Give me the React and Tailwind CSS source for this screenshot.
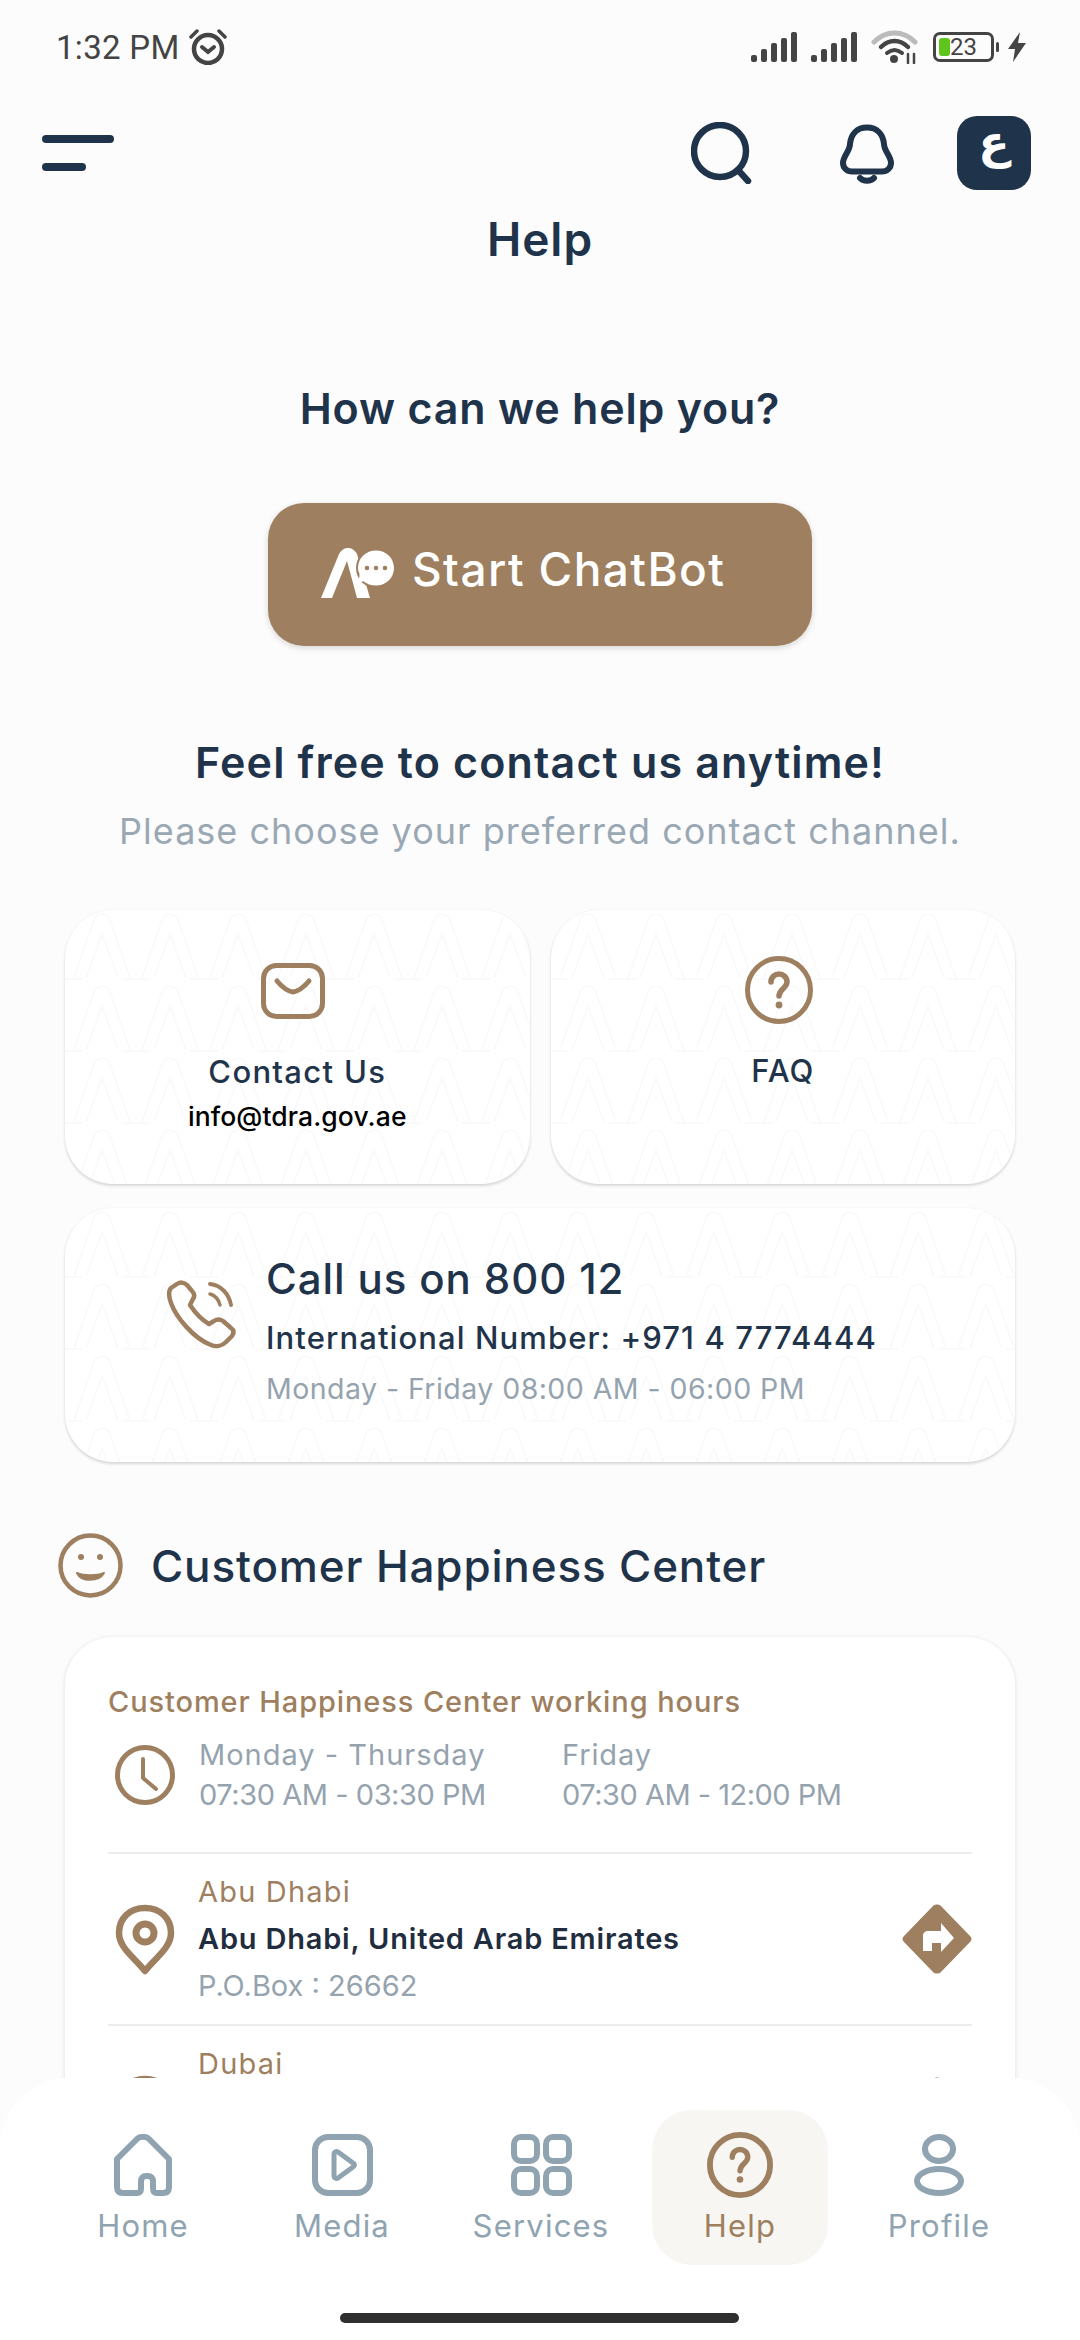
const navy = "#1f344a"
const tan = "#9e7f5f"
const slate = "#8fa3b0"

function SignalIcon() {
  return (
    <svg width="47" height="30" viewBox="0 0 47 30" fill="#444">
      <rect x="0" y="23" width="6" height="7" rx="2" />
      <rect x="10" y="17" width="6" height="13" rx="2" />
      <rect x="20" y="11" width="6" height="19" rx="2" />
      <rect x="30" y="6" width="6" height="24" rx="2" />
      <rect x="40" y="0" width="6" height="30" rx="2" />
    </svg>
  )
}

function StatusBar() {
  return (
    <div className="h-[94px] pl-[56px] pr-[54px] flex items-center justify-between">
      <div className="flex items-center gap-[8px]">
        <span className="font-['Roboto'] text-[33px] leading-none tracking-[0.3px] text-[#444]">1:32 PM</span>
        <svg width="40" height="36" viewBox="0 0 40 36" fill="none" stroke="#444" strokeLinecap="round">
          <circle cx="20" cy="20" r="14" strokeWidth="4.5" />
          <path d="M14 18l6 5 6-5" strokeWidth="4" />
          <path d="M3 8l6-6M37 8l-6-6" strokeWidth="3.5" />
        </svg>
      </div>
      <div className="flex items-center">
        <SignalIcon />
        <div className="w-[13px]" />
        <SignalIcon />
        <svg className="ml-[13px]" width="47" height="34" viewBox="0 0 47 34" fill="none" strokeLinecap="round">
          <path d="M3 12C15 0 32 0 44 12" stroke="#bbb" strokeWidth="5" />
          <path d="M10 17c8-8 19-8 27 0" stroke="#444" strokeWidth="4.5" />
          <path d="M16 23c5-4 10-4 15 0" stroke="#444" strokeWidth="4" />
          <circle cx="23" cy="29" r="4" fill="#444" />
          <path d="M37 24v9M43 24v9" stroke="#444" strokeWidth="2.5" />
        </svg>
        <div className="ml-[15px] relative w-[61px] h-[30px] rounded-[7px] border-[3px] border-[#444] flex items-center">
          <div className="absolute left-[3px] top-[3px] bottom-[3px] w-[11px] rounded-[3px] bg-[#5fc41e]" />
          <span className="relative ml-[14px] font-['Roboto'] text-[24px] leading-none text-[#444]">23</span>
        </div>
        <div className="ml-[2px] w-[3px] h-[10px] rounded-full bg-[#444]" />
        <svg className="ml-[9px]" width="18" height="30" viewBox="0 0 18 30" fill="#444">
          <path d="M12 0L0 17h7l-2 13L18 11h-8z" />
        </svg>
      </div>
    </div>
  )
}

function Header() {
  return (
    <div className="mt-[22px] h-[73px] pl-[42px] pr-[49px] flex items-center">
      <div className="flex flex-col gap-[20px]">
        <div className="w-[72px] h-[8px] rounded-full bg-[#1f344a]" />
        <div className="w-[44px] h-[8px] rounded-full bg-[#1f344a]" />
      </div>
      <svg className="ml-auto" width="62" height="62" viewBox="0 0 62 62" fill="none" stroke={navy} strokeWidth="6.5" strokeLinecap="round">
        <circle cx="29" cy="29" r="26" />
        <path d="M47 48l10 11" />
      </svg>
      <svg className="ml-[87px] mt-[3px]" width="54" height="60" viewBox="10 14 54 60" fill="none" stroke={navy} strokeWidth="6" strokeLinecap="round" strokeLinejoin="round">
        <path d="M37 17.5C27 17.5 21 24 20 34 20 41 13 46 13 53 13 58 17 61.5 22 61.5H52C57 61.5 61 58 61 53 61 46 54 41 54 34 53 24 47 17.5 37 17.5Z" />
        <path d="M30 68C33 71.5 41 71.5 44 68" />
      </svg>
      <div className="ml-[63px] w-[74px] h-[74px] rounded-[20px] bg-[#1f344a] flex items-center justify-center pb-[22px]">
        <span className="font-['DejaVu_Sans'] text-[46px] font-bold leading-none text-white">ع</span>
      </div>
    </div>
  )
}

function BotLogo() {
  return (
    <svg className="mt-[6px]" width="100" height="75" viewBox="0 0 100 75">
      <path d="M11 63L29 19C32 14 35 13 38 13 41 13 44 14 47 19L60 63H47L37 26 22 63Z" fill="#fff" />
      <circle cx="66" cy="33" r="20" fill={tan} />
      <path d="M66 15.500C76 15.500 84 23 84 33 84 43 76 50.500 66 50.500 61 50.500 57 49 53 46 52 47.500 50 48 47 47.500 49 45.500 49.500 42.500 49.500 39 48.500 37 48 35 48 33 48 23 56 15.500 66 15.500Z" fill="#fff" />
      <circle cx="57" cy="33" r="2.300" fill={tan} />
      <circle cx="66" cy="33" r="2.300" fill={tan} />
      <circle cx="75" cy="33" r="2.300" fill={tan} />
    </svg>
  )
}

// faint "A" shapes behind the contact cards
function Watermark({ id }) {
  return (
    <svg className="absolute inset-0 w-full h-full" aria-hidden="true">
      <defs>
        <pattern id={id} width="68" height="72" patternUnits="userSpaceOnUse" patternTransform="translate(3 0)">
          <g fill="none" stroke="#f9f9fa" strokeWidth="1.500">
            <path d="M6 68L26 10C29 2 39 2 42 10L62 68" />
            <path d="M18 68L34 24 50 68" />
            <path d="M0 69H14M54 69H68" />
          </g>
        </pattern>
      </defs>
      <rect width="100%" height="100%" fill={`url(#${id})`} />
    </svg>
  )
}

function QuestionIcon({ size, stroke }) {
  return (
    <svg width={size} height={size} viewBox="0 0 68 68" fill="none" stroke={tan} strokeLinecap="round">
      <circle cx="34" cy="34" r={34 - stroke / 2} strokeWidth={stroke} />
      <path d="M26 26c0-5 4-8 8-8s8 3 8 8c0 6-8 7-8 14" strokeWidth="5.5" />
      <circle cx="34" cy="49" r="3.4" fill={tan} stroke="none" />
    </svg>
  )
}

function ContactCards() {
  return (
    <>
      <div className="mt-[54px] mx-[65px] grid grid-cols-2 gap-[21px]">
        <div className="relative h-[274px] rounded-[48px] bg-white overflow-hidden shadow-[0_2px_3px_rgba(0,0,0,0.14),0_0_2px_rgba(0,0,0,0.06)]">
          <Watermark id="wm1" />
          <div className="relative pt-[53px] flex flex-col items-center">
            <svg className="-ml-[8px]" width="64" height="56" viewBox="0 0 64 56" fill="none" stroke={tan} strokeWidth="5" strokeLinecap="round" strokeLinejoin="round">
              <rect x="2.5" y="2.5" width="59" height="51" rx="13" />
              <path d="M16 18c5 6 10 10 16 11 6-1 11-5 16-11" />
            </svg>
            <div className="mt-[31px] h-[44px] flex items-center text-[31px] font-medium text-[#1f344a] tracking-[1.3px]">Contact Us</div>
            <div className="mt-[5px] h-[36px] flex items-center text-[26.5px] font-medium text-black tracking-[0.1px]">info@tdra.gov.ae</div>
          </div>
        </div>
        <div className="relative h-[274px] rounded-[48px] bg-white overflow-hidden shadow-[0_2px_3px_rgba(0,0,0,0.14),0_0_2px_rgba(0,0,0,0.06)]">
          <Watermark id="wm2" />
          <div className="relative pt-[46px] flex flex-col items-center">
            <div className="-ml-[8px]">
              <QuestionIcon size={68} stroke={5} />
            </div>
            <div className="mt-[25px] h-[44px] flex items-center text-[31px] font-medium text-[#1f344a] tracking-[1px]">FAQ</div>
          </div>
        </div>
      </div>

      <div className="relative mt-[24px] mx-[65px] h-[254px] rounded-[48px] bg-white overflow-hidden shadow-[0_2px_3px_rgba(0,0,0,0.14),0_0_2px_rgba(0,0,0,0.06)]">
        <Watermark id="wm3" />
        <div className="relative h-full pl-[90px] flex items-center">
          <svg className="-mt-[40px]" width="90" height="90" viewBox="0 0 90 90" fill="none" stroke={tan} strokeWidth="4.5" strokeLinecap="round" strokeLinejoin="round">
            <path d="M22 14L16 18C13 21 14 28 16 33 21 47 38 68 56 75 61 77 67 76 71 72L77 66C79 63 79 60 76 58L68 51C65 49 62 49 59 51L54 54C47 50 39 41 35 35L38 29C40 26 39 23 37 21L32 15C29 12 25 12 22 14Z" />
            <path d="M55 14C66 15 74 24 76 35" strokeWidth="4" />
            <path d="M55 24C60 25 64 30 65 35" strokeWidth="3.5" />
          </svg>
          <div className="ml-[21px] flex flex-col -mt-[5px]">
            <div className="h-[50px] flex items-center text-[42px] font-medium text-[#1f344a] tracking-[0.9px]">Call us on 800 12</div>
            <div className="mt-[11px] h-[48px] flex items-center text-[31px] font-medium text-[#1f344a] tracking-[1.1px]">International Number: +971 4 7774444</div>
            <div className="mt-[5px] h-[44px] flex items-center text-[28.5px] text-[#95a3ae] tracking-[0.45px]">Monday - Friday 08:00 AM - 06:00 PM</div>
          </div>
        </div>
      </div>
    </>
  )
}

function PinIcon({ className }) {
  return (
    <svg className={className} width="60" height="71" viewBox="0 0 60 71" fill="none" stroke={tan} strokeLinejoin="round">
      <path d="M30 67C20 54 4 44 4 29 4 14 15 4 30 4s26 10 26 25c0 15-16 25-26 38z" strokeWidth="6.5" />
      <circle cx="30" cy="29" r="9" strokeWidth="7" />
    </svg>
  )
}

function DirectionIcon({ className }) {
  return (
    <svg className={className} width="70" height="70" viewBox="0 0 70 70">
      <path d="M31 2c2-2 6-2 8 0l29 30c2 2 2 4 0 6L39 68c-2 2-6 2-8 0L2 38c-2-2-2-4 0-6z" fill={tan} />
      <path d="M21 47V32c0-3 2-5 5-5h13v-8l13 15-13 14v-9h-9v8z" fill="#fff" />
    </svg>
  )
}

function HappinessCard() {
  return (
    <>
      <div className="mt-[71px] ml-[58px] flex items-center">
        <svg width="65" height="65" viewBox="0 0 65 65" fill="none" stroke={tan} strokeLinecap="round">
          <circle cx="32.5" cy="32.5" r="30" strokeWidth="4.5" />
          <circle cx="23" cy="24" r="3" fill={tan} stroke="none" />
          <circle cx="42" cy="24" r="3" fill={tan} stroke="none" />
          <path d="M19 40c4 9 22 9 27 0-7 3-20 3-27 0z" fill={tan} strokeWidth="2" strokeLinejoin="round" />
        </svg>
        <div className="ml-[28px] text-[44px] leading-none font-medium text-[#1f344a] tracking-[0.85px]">Customer Happiness Center</div>
      </div>

      <div className="mt-[39px] mx-[65px] rounded-[48px] bg-white px-[43px] pt-[45px] pb-[60px] shadow-[0_1px_5px_rgba(0,0,0,0.12)]">
        <div className="h-[40px] flex items-center text-[29px] font-medium text-[#9e7f5f] tracking-[0.9px]">Customer Happiness Center working hours</div>
        <div className="mt-[13px] h-[80px] flex items-center">
          <svg className="ml-[7px]" width="60" height="60" viewBox="0 0 60 60" fill="none" stroke={tan} strokeLinecap="round" strokeLinejoin="round">
            <circle cx="30" cy="30" r="27.5" strokeWidth="5" />
            <path d="M28 14v19l13 11" strokeWidth="4" />
          </svg>
          <div className="ml-[24px] w-[363px] text-[29px] leading-[40px] text-[#95a3ae]">
            <div className="tracking-[1px]">Monday - Thursday</div>
            <div className="tracking-[-0.45px]">07:30 AM - 03:30 PM</div>
          </div>
          <div className="text-[29px] leading-[40px] text-[#95a3ae]">
            <div className="tracking-[0.9px]">Friday</div>
            <div className="tracking-[-0.5px]">07:30 AM - 12:00 PM</div>
          </div>
        </div>
        <div className="mt-[37px] h-[2px] bg-[#ececec]" />
        <div className="pt-[18px] pb-[18px] flex items-center">
          <PinIcon className="ml-[7px]" />
          <div className="ml-[23px] flex-1 flex flex-col gap-[7px]">
            <div className="h-[40px] flex items-center text-[29px] text-[#9e7f5f] tracking-[1.2px]">Abu Dhabi</div>
            <div className="h-[40px] flex items-center text-[29px] font-semibold text-[#1f2d3f] tracking-[0.8px]">Abu Dhabi, United Arab Emirates</div>
            <div className="h-[40px] flex items-center text-[29px] text-[#95a3ae]">P.O.Box : 26662</div>
          </div>
          <DirectionIcon />
        </div>
        <div className="h-[2px] bg-[#ececec]" />
        <div className="pt-[18px] flex items-start">
          <PinIcon className="ml-[7px] mt-[31px]" />
          <div className="ml-[23px] flex-1 h-[40px] flex items-center text-[29px] text-[#9e7f5f] tracking-[1.2px]">Dubai</div>
          <DirectionIcon className="mt-[33px]" />
        </div>
      </div>
    </>
  )
}

function NavItem({ label, active, children }) {
  return (
    <div className={active ? "w-[176px] h-[155px] rounded-[40px] bg-[#f7f6f3] flex flex-col items-center" : "w-[176px] h-[155px] flex flex-col items-center"}>
      <div className="h-[89px] pt-[24px] flex items-start justify-center">{children}</div>
      <div className={active ? "h-[54px] flex items-center text-[31px] tracking-[1.2px] text-[#9e7f5f]" : "h-[54px] flex items-center text-[31px] tracking-[1.2px] text-[#8fa3b0]"}>{label}</div>
    </div>
  )
}

function BottomNav() {
  return (
    <div className="absolute left-0 right-0 bottom-0 h-[262px] rounded-t-[70px] bg-white">
      <div className="mt-[32px] pl-[55px] pr-[53px] flex justify-between">
        <NavItem label="Home">
          <svg width="58" height="62" viewBox="0 0 58 62" fill="none" stroke={slate} strokeWidth="6" strokeLinecap="round" strokeLinejoin="round">
            <path d="M3 25L23 5c3-3 9-3 12 0l20 20v28c0 4-2 6-6 6h-6c-3 0-4-2-4-5V47c0-3-2-5-5-5h-2c-3 0-5 2-5 5v7c0 3-1 5-4 5H9c-4 0-6-2-6-6z" />
          </svg>
        </NavItem>
        <NavItem label="Media">
          <svg width="61" height="62" viewBox="0 0 61 62" fill="none" stroke={slate} strokeWidth="6" strokeLinejoin="round">
            <rect x="3" y="3" width="55" height="56" rx="13" />
            <path d="M22 20c0-2 2-3 4-2l15 11c2 1 2 3 0 4L26 44c-2 1-4 0-4-2z" strokeWidth="5" />
          </svg>
        </NavItem>
        <NavItem label="Services">
          <svg width="61" height="62" viewBox="0 0 61 62" fill="none" stroke={slate} strokeWidth="6">
            <rect x="3" y="3" width="23" height="24" rx="7" />
            <rect x="35" y="3" width="23" height="24" rx="7" />
            <rect x="3" y="35" width="23" height="24" rx="7" />
            <rect x="35" y="35" width="23" height="24" rx="7" />
          </svg>
        </NavItem>
        <NavItem label="Help" active>
          <div className="-mt-[2px]">
            <QuestionIcon size={66} stroke={6} />
          </div>
        </NavItem>
        <NavItem label="Profile">
          <svg width="50" height="62" viewBox="0 0 50 62" fill="none" stroke={slate} strokeWidth="6">
            <ellipse cx="25" cy="15" rx="14" ry="12" />
            <ellipse cx="25" cy="47" rx="22" ry="12" />
          </svg>
        </NavItem>
      </div>
      <div className="absolute bottom-[17px] left-[340px] w-[399px] h-[10px] rounded-full bg-[#2f2f2f]" />
    </div>
  )
}

export default function App() {
  return (
    <div className="relative w-[1080px] h-[2340px] overflow-hidden bg-[#fcfcfd] font-['Inter',sans-serif]">
      <StatusBar />
      <Header />
      <div className="mt-[22px] h-[56px] flex items-center justify-center text-[46px] font-semibold text-[#1f344a] tracking-[1px]">Help</div>
      <div className="mt-[111px] h-[60px] flex items-center justify-center text-[43px] font-semibold text-[#1f344a] tracking-[0.8px]">How can we help you?</div>
      <div className="mt-[65px] mx-auto w-[544px] h-[143px] rounded-[36px] bg-[#9e7f5f] shadow-[0_2px_6px_rgba(0,0,0,0.15)] flex items-center pl-[42px] pb-[10px]">
        <BotLogo />
        <span className="ml-[2px] text-[46px] font-medium text-white tracking-[1.4px]">Start ChatBot</span>
      </div>
      <div className="mt-[86px] h-[60px] flex items-center justify-center text-[43px] font-semibold text-[#1f344a] tracking-[1.15px]">Feel free to contact us anytime!</div>
      <div className="mt-[14px] h-[50px] flex items-center justify-center text-[36px] text-[#9aa8b4] tracking-[1px]">Please choose your preferred contact channel.</div>
      <ContactCards />
      <HappinessCard />
      <BottomNav />
    </div>
  )
}
